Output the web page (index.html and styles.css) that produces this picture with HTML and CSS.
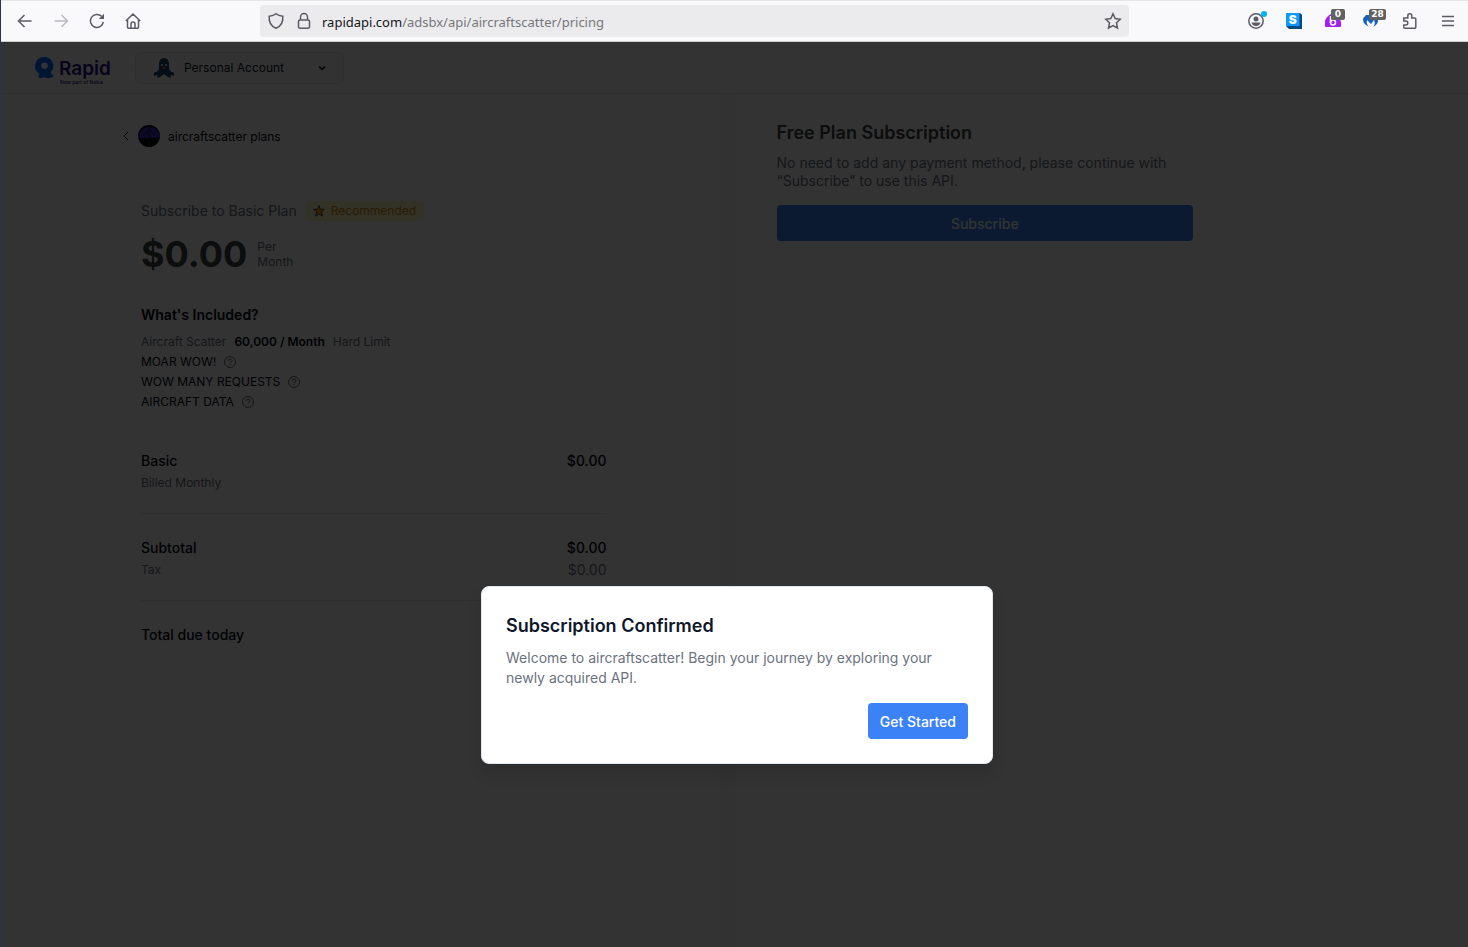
FILE: index.html
```html
<!DOCTYPE html>
<html lang="en">
  <head>
    <meta charset="UTF-8" />
    <meta name="viewport" content="width=device-width, initial-scale=1.0" />
    <title>aircraftscatter pricing</title>
    <link rel="stylesheet" href="styles.css">
  </head>
  <body>
    <!-- Browser toolbar -->
    <div class="toolbar">
      <div class="nav-buttons">
        <button class="tool" aria-label="Back">
          <svg width="16" height="16" viewBox="0 0 16 16"><path d="M14.500 8H1.500M7.500 2L1.500 8l6 6" /></svg>
        </button>
        <button class="tool faded" aria-label="Forward">
          <svg width="16" height="16" viewBox="0 0 16 16"><path d="M1.500 8h13M8.500 2l6 6-6 6" /></svg>
        </button>
        <button class="tool" aria-label="Reload">
          <svg width="16" height="16" viewBox="0 0 16 16"><path d="M14.300 9A6.500 6.500 0 1 1 12.500 3.300" /><path class="solid" d="M15 0.800V6H9.800z" /></svg>
        </button>
        <button class="tool" aria-label="Home">
          <svg width="16" height="16" viewBox="0 0 16 16"><path d="M0.800 8L8 1l7.200 7M2.500 6.800V14a1.200 1.200 0 0 0 1.200 1.200h8.600A1.200 1.200 0 0 0 13.500 14V6.800M6 15v-4a2 2 0 0 1 4 0v4" /></svg>
        </button>
      </div>
      <div class="url-bar">
        <svg width="16" height="16" viewBox="0 0 16 16"><path d="M8 0.800C6 2.500 3.500 3 1.200 3.200C0.800 8.500 2.500 13 8 15.300C13.500 13 15.200 8.500 14.800 3.200C12.500 3 10 2.500 8 0.800z" /></svg>
        <svg class="lock" width="16" height="16" viewBox="0 0 16 16"><rect x="2.500" y="7" width="11" height="8.300" rx="1.500" /><path d="M4.500 7V4a3.500 3.500 0 0 1 7 0v3" /></svg>
        <a class="url" href="#"><span class="host">rapidapi.com</span>/adsbx/api/aircraftscatter/pricing</a>
        <button class="tool" aria-label="Bookmark">
          <svg width="16" height="16" viewBox="0 0 16 16"><path d="M8 0.800l2.200 4.700 5 .7-3.700 3.500 1 5.300L8 12.500 3.500 15l1-5.300L.8 6.200l5-.7z" /></svg>
        </button>
      </div>
      <div class="extensions">
        <button class="tool" aria-label="Account">
          <svg width="16" height="16" viewBox="0 0 16 16"><circle cx="8" cy="8" r="7.200" /><circle class="solid" cx="8" cy="6" r="2.500" /><path class="solid" d="M3.500 9.500h9q-1 3.500-4.500 3.500t-4.500-3.500z" /><circle cx="16" cy="1" r="3" fill="#00b3f4" stroke="none" /></svg>
        </button>
        <button class="tool" aria-label="Stylus">
          <svg class="stylus" width="16" height="16" viewBox="0 0 16 16"><path fill="#004a7f" stroke="none" d="M0 0h14l2 2v14H3l-3-3z" /><path fill="#0d99ff" stroke="none" d="M0 0h13.500v13H0z" /><text x="6.700" y="11">S</text></svg>
        </button>
        <button class="tool" aria-label="Privacy extension">
          <svg width="16" height="16" viewBox="0 0 16 16"><path fill="#a21ff0" stroke="none" d="M0 8Q1 4 6 1h5q4 4 5 8v4q0 1-1 1H1q-1 0-1-1z" /><circle cx="8" cy="9.500" r="2.500" stroke="#fff" /><path d="M5.500 3v7" stroke="#fff" /></svg>
          <span class="badge">0</span>
        </button>
        <button class="tool" aria-label="Browser guard">
          <svg width="16" height="16" viewBox="0 0 16 16"><path fill="#1761bd" stroke="none" d="M3 2Q-3 7 3 12l3 2Q3 11 4 7l4 4 3-4q2 4-1 7l3-2q4-4 0-10z" /></svg>
          <span class="badge">28</span>
        </button>
        <button class="tool" aria-label="Extensions">
          <svg width="16" height="16" viewBox="0 0 16 16"><path d="M1.800 5h4V2.800a2 2 0 0 1 4 0V5h3a1 1 0 0 1 1 1v8.200a1 1 0 0 1-1 1h-10a1 1 0 0 1-1-1V12h2a2 2 0 0 0 0-4h-2z" /></svg>
        </button>
        <button class="tool" aria-label="Menu">
          <svg width="16" height="16" viewBox="0 0 16 16"><path d="M2 3.500h12M2 8h12M2 12.500h12" /></svg>
        </button>
      </div>
    </div>

    <div class="page">
      <header class="header">
        <a class="logo" href="#" aria-label="Rapid">
          <svg width="80" height="32" viewBox="0 0 80 32"><path fill="#0065ff" fill-rule="evenodd" d="M11 3a9 9 0 0 1 6.500 15.500q1 2.500 3.500 3-2.500 3-6 2.500-2 0-4-1-3 2-6 0l1.500-3.300A9 9 0 0 1 11 3zm.5 5.500a3.300 3.300 0 1 0 0 6.600 3.300 3.300 0 0 0 0-6.600z" /><text class="brand" x="26" y="21">Rapid</text><text class="tagline" x="27" y="30">Now part of Nokia</text></svg>
        </a>
        <button class="account">
          <svg width="24" height="24" viewBox="0 0 24 24"><circle cx="12" cy="12" r="12" fill="#fff" /><path fill="#12406e" d="M7 8q0-6 5-6t5 6v4q0 3 3 4l2 1v3l-4-1 1 3-3-1-4-3-4 3-3 1 1-3-4 1v-3l2-1q3-1 3-4z" /><circle cx="10" cy="9" r="1" fill="#fff" /><circle cx="14" cy="9" r="1" fill="#fff" /><path fill="#f44" d="M10 11h4l-2 3z" /></svg>
          <span class="account-name">Personal Account</span>
          <svg width="10" height="10" viewBox="0 0 10 10"><path d="M2 3.500l3 3 3-3" fill="none" stroke="#111827" stroke-width="1.500" /></svg>
        </button>
      </header>

      <main class="checkout">
        <section class="summary">
          <a class="back" href="#">
            <svg width="8" height="12" viewBox="0 0 8 12"><path d="M6 2L2 6l4 4" fill="none" stroke="#111827" /></svg>
            <svg width="22" height="22" viewBox="0 0 22 22"><circle cx="11" cy="11" r="11" /><path fill="#3a30b0" d="M0 13a11 11 0 0 1 22 0z" /><path stroke="#15105c" d="M11 1v12M11 5l-6 6M11 4l7 7" /><path stroke="#176020" d="M11 16v5" /></svg>
            <span>aircraftscatter plans</span>
          </a>

          <div class="plan">
            <span class="plan-name">Subscribe to Basic Plan</span>
            <span class="recommended">
              <svg width="12" height="12" viewBox="0 0 12 12"><path fill="#ffa51e" stroke="#000" stroke-width="0.600" d="M6 .5l1.400 3.700 4 .1-3.100 2.600 1.200 4.300L6 8.800l-3.500 2.400 1.200-4.300L.6 4.300l4-.1z" /></svg>
              Recommended
            </span>
          </div>
          <div class="price">
            <span class="amount">$0.00</span>
            <span class="period">Per<br>Month</span>
          </div>

          <h3 class="included-title">What's Included?</h3>
          <ul class="included">
            <li><span class="muted">Aircraft Scatter</span> <strong>60,000 / Month</strong> <span class="muted">Hard Limit</span></li>
            <li>MOAR WOW! <svg class="help" width="12" height="12" viewBox="0 0 12 12"><circle cx="6" cy="6" r="5.500" /><path d="M4 5q0-2 2-2t2 1.500T6 6.500V7M6 8.300v1" /></svg></li>
            <li>WOW MANY REQUESTS <svg class="help" width="12" height="12" viewBox="0 0 12 12"><circle cx="6" cy="6" r="5.500" /><path d="M4 5q0-2 2-2t2 1.500T6 6.500V7M6 8.300v1" /></svg></li>
            <li>AIRCRAFT DATA <svg class="help" width="12" height="12" viewBox="0 0 12 12"><circle cx="6" cy="6" r="5.500" /><path d="M4 5q0-2 2-2t2 1.500T6 6.500V7M6 8.300v1" /></svg></li>
          </ul>

          <div class="bill">
            <div class="row"><span>Basic</span><span>$0.00</span></div>
            <div class="row small"><span>Billed Monthly</span></div>
          </div>
          <div class="bill">
            <div class="row"><span>Subtotal</span><span>$0.00</span></div>
            <div class="row small"><span>Tax</span><span class="tax">$0.00</span></div>
          </div>
          <div class="bill">
            <div class="row"><span>Total due today</span></div>
          </div>
        </section>

        <section class="payment">
          <h2 class="payment-title">Free Plan Subscription</h2>
          <p class="payment-text">No need to add any payment method, please continue with “Subscribe” to use this API.</p>
          <button class="subscribe">Subscribe</button>
        </section>
      </main>

      <div class="overlay">
        <div class="modal" role="dialog" aria-labelledby="modal-title">
          <h2 class="modal-title" id="modal-title">Subscription Confirmed</h2>
          <p class="modal-text">Welcome to aircraftscatter! Begin your journey by exploring your newly acquired API.</p>
          <button class="primary">Get Started</button>
        </div>
      </div>
    </div>
  </body>
</html>
```

FILE: styles.css
```css
* {
  margin: 0;
  padding: 0;
  box-sizing: border-box;
}

body {
  display: flex;
  flex-direction: column;
  min-height: 100vh;
  border-left: 1px solid #2b3346;
  font-family: Inter, "Liberation Sans", sans-serif;
  color: #030712;
  background-color: #fff;
}

button {
  border: none;
  background: none;
  font-family: inherit;
  cursor: pointer;
}

a {
  color: inherit;
  text-decoration: none;
}

svg {
  display: block;
  flex-shrink: 0;
  overflow: visible;
}

/* Toolbar */
.toolbar {
  display: flex;
  align-items: center;
  height: 42px;
  padding: 0 12px 0 16px;
  background-color: #f9f9fb;
  border-top: 1px solid #e5e5e8;
  border-bottom: 1px solid #ccc;
}

.nav-buttons {
  display: flex;
  gap: 20px;
  width: 243px;
}

.tool {
  position: relative;
}

.toolbar svg {
  fill: none;
  stroke: #5b5b66;
  stroke-width: 1.5;
}

.toolbar .solid {
  fill: #5b5b66;
  stroke: none;
}

.faded {
  opacity: 0.4;
}

.url-bar {
  display: flex;
  align-items: center;
  flex: 1;
  height: 32px;
  padding: 0 8px;
  background-color: #ebebed;
  border-radius: 4px;
}

.lock {
  margin-left: 12px;
}

.url {
  flex: 1;
  margin-left: 10px;
  padding-top: 2px;
  font: 13px/20px "Noto Sans", sans-serif;
  color: #77777b;
}

.host {
  color: #15141a;
}

.extensions {
  display: flex;
  align-items: center;
  justify-content: space-between;
  width: 208px;
  margin-left: 119px;
}

.toolbar .stylus text {
  font: 900 12px Inter, sans-serif;
  fill: #fff;
  stroke: none;
  text-anchor: middle;
}

.badge {
  position: absolute;
  top: -4px;
  left: 6px;
  min-width: 14px;
  padding: 0 2px;
  border-radius: 2px;
  background-color: #616161;
  color: #fff;
  font: bold 9px/11px "DejaVu Sans", sans-serif;
}

/* Page */
.page {
  position: relative;
  display: flex;
  flex-direction: column;
  flex: 1;
}

.header {
  display: flex;
  align-items: center;
  gap: 22px;
  height: 52px;
  padding-left: 32px;
  border-bottom: 1px solid #e5e7eb;
}

.logo {
  padding-top: 4px;
}

.brand {
  font: 600 19px Inter, sans-serif;
  fill: #28108c;
}

.tagline {
  font: 500 5px Inter, sans-serif;
  fill: #28108c;
}

.account {
  display: flex;
  align-items: center;
  width: 209px;
  height: 32px;
  padding: 0 16px;
  border: 1px solid #e5e7eb;
  border-radius: 6px;
  background-color: #fafafa;
}

.account-name {
  flex: 1;
  margin-left: 8px;
  font-size: 12px;
  text-align: left;
  color: #111827;
}

.checkout {
  display: flex;
  flex: 1;
}

.summary {
  width: 50%;
  padding: 31px 112px 0 140px;
  border-right: 16px solid #fafafa;
}

.back {
  display: flex;
  align-items: center;
  gap: 8px;
  height: 22px;
  margin-left: -19px;
  font-size: 12px;
}

.plan {
  display: flex;
  align-items: center;
  gap: 8px;
  margin-top: 54px;
}

.plan-name {
  font-size: 14px;
  line-height: 20px;
  color: #6b7280;
}

.recommended {
  display: flex;
  align-items: center;
  gap: 6px;
  padding: 0 8px;
  border-radius: 4px;
  background-color: #fef9c3;
  color: #ca8a04;
  font-size: 12px;
  line-height: 20px;
}

.price {
  display: flex;
  align-items: center;
  gap: 10px;
  margin-top: 9px;
}

.amount {
  font-size: 36px;
  font-weight: 700;
  line-height: 48px;
  color: #3c4043;
}

.period {
  font-size: 12px;
  line-height: 15px;
  color: #6b7280;
}

.included-title {
  margin-top: 27px;
  font-size: 14px;
  font-weight: 600;
  line-height: 20px;
}

.included {
  margin-top: 7px;
  list-style: none;
  font-size: 12px;
  line-height: 20px;
}

.included li {
  display: flex;
  align-items: center;
  gap: 8px;
}

.included strong {
  font-weight: 600;
}

.muted {
  color: #6b7280;
}

.help {
  fill: none;
  stroke: #6b7280;
}

.bill {
  padding: 24px 0 20px;
  border-bottom: 1px solid #e5e7eb;
}

.included + .bill {
  margin-top: 15px;
}

.bill:last-child {
  border-bottom: none;
}

.row {
  display: flex;
  justify-content: space-between;
  font-size: 14px;
  font-weight: 500;
  line-height: 20px;
}

.small {
  margin-top: 2px;
  font-size: 12px;
  font-weight: 400;
  color: #6b7280;
}

.tax {
  font-size: 14px;
}

.payment {
  width: 50%;
  padding: 28px 275px 0 42px;
}

.payment-title {
  font-size: 18px;
  font-weight: 600;
  line-height: 22px;
  color: #3c4043;
}

.payment-text {
  margin-top: 10px;
  font-size: 14px;
  line-height: 18px;
  color: #6b7280;
}

.subscribe {
  width: 100%;
  height: 36px;
  margin-top: 15px;
  border-radius: 4px;
  background-color: #3b82f6;
  color: #fff;
  font-size: 14px;
  font-weight: 500;
}

/* Confirmation modal */
.overlay {
  position: absolute;
  inset: 0;
  display: flex;
  justify-content: center;
  align-items: flex-end;
  padding: 0 0 183px 5px;
  background-color: rgba(0, 0, 0, 0.8);
}

.modal {
  display: flex;
  flex-direction: column;
  width: 512px;
  padding: 25px 24px 24px;
  border: 1px solid #e2e8f0;
  border-radius: 8px;
  background-color: #fff;
  box-shadow: 0 10px 15px rgba(0, 0, 0, 0.1);
}

.modal-title {
  font-size: 18px;
  font-weight: 600;
  line-height: 28px;
  color: #0f172a;
}

.modal-text {
  margin-top: 8px;
  font-size: 14px;
  line-height: 20px;
  color: #6b7280;
}

.primary {
  align-self: flex-end;
  height: 36px;
  margin-top: 15px;
  padding: 0 12px;
  border-radius: 4px;
  background-color: #3b82f6;
  color: #fff;
  font-size: 14px;
  font-weight: 500;
}
```
